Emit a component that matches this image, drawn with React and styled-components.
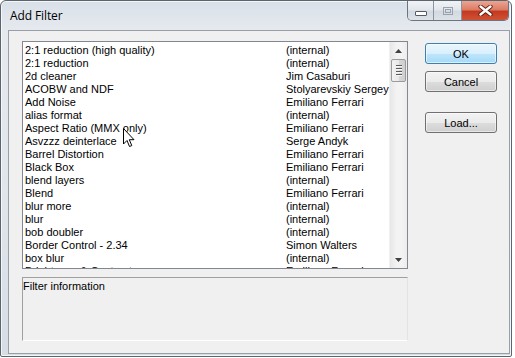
import React from "react";
import styled, { createGlobalStyle } from "styled-components";

const GlobalStyle = createGlobalStyle`
  html, body { margin: 0; padding: 0; background: #ffffff; }
  body { width: 515px; height: 358px; overflow: hidden; }
`;

const UI_FONT = `"Liberation Sans", Arial, sans-serif`;

const Win = styled.div`
  position: relative;
  box-sizing: border-box;
  width: 512px;
  height: 357px;
  border: 1px solid #5b6570;
  border-radius: 6px 6px 2px 2px;
  background: linear-gradient(180deg, #d9e0e8 0px, #e6eaef 30px, #e0e5eb 200px, #d6dde5 100%);
  display: flex;
  flex-direction: column;
  box-shadow: inset 0 0 0 1px rgba(255,255,255,0.7);
`;

const TitleBar = styled.div`
  height: 29px;
  display: flex;
  align-items: flex-start;
  padding-left: 9px;
`;

const Title = styled.span`
  font-family: "Open Sans", "Noto Sans", sans-serif;
  font-size: 12px;
  color: #000;
  margin-top: 6px;
  letter-spacing: -0.1px;
`;

const Caption = styled.div`
  margin-left: auto;
  margin-right: 2px;
  display: flex;
  height: 19px;
  border: 1px solid #6b7582;
  border-top: none;
  border-radius: 0 0 5px 5px;
  overflow: hidden;
`;

const CapBtn = styled.div`
  width: ${(p) => p.w}px;
  height: 19px;
  display: flex;
  align-items: center;
  justify-content: center;
  background: ${(p) =>
    p.close
      ? "linear-gradient(180deg, #eaa592 0%, #dd7d66 45%, #c43a20 55%, #cf5235 100%)"
      : "linear-gradient(180deg, #f1f3f6 0%, #e3e7ec 45%, #d3d9e0 55%, #dde2e8 100%)"};
  border-left: ${(p) => (p.first ? "none" : "1px solid #8a939e")};
`;

const MinGlyph = styled.div`
  width: 10px;
  height: 3px;
  border: 1px solid #535b66;
  background: #fff;
  margin-top: 5px;
  border-radius: 1px;
`;

const MaxGlyph = styled.div`
  width: 10px;
  height: 8px;
  border: 1px solid #9aa2ad;
  box-sizing: border-box;
  display: flex;
  align-items: center;
  justify-content: center;
  &::after {
    content: "";
    width: 4px;
    height: 2px;
    border: 1px solid #9aa2ad;
  }
`;

const Client = styled.div`
  flex: 1;
  margin: 0 1px 2px 7px;
  background: #f0f0f0;
  border: 1px solid #97a0aa;
  display: flex;
  padding: 10px 0 0 13px;
`;

const LeftCol = styled.div`
  width: 386px;
  display: flex;
  flex-direction: column;
  gap: 8px;
`;

const ListBox = styled.div`
  position: relative;
  box-sizing: border-box;
  height: 228px;
  border: 1px solid #828790;
  background: #fff;
  display: flex;
  overflow: hidden;
`;

const Rows = styled.div`
  flex: 1;
  padding: 2px 0 0 2px;
  overflow: hidden;
`;

const Row = styled.div`
  display: grid;
  grid-template-columns: 261px 1fr;
  height: 13px;
  line-height: 13px;
  font-family: ${UI_FONT};
  font-size: 11px;
  color: #000;
  white-space: nowrap;
`;

const ScrollBar = styled.div`
  width: 17px;
  display: flex;
  flex-direction: column;
  align-items: center;
  background: linear-gradient(90deg, #e7e7e7, #f3f3f3 40%, #f3f3f3 70%, #ececec);
  border-left: 1px solid #f0f0f0;
`;

const Arrow = styled.div`
  height: 17px;
  display: flex;
  align-items: center;
  justify-content: center;
  width: 100%;
`;

const Thumb = styled.div`
  box-sizing: border-box;
  width: 15px;
  height: 23px;
  border: 1px solid #9b9b9b;
  border-radius: 2px;
  background: linear-gradient(90deg, #f3f3f3, #e8e8e8 50%, #d7d7d7 51%, #cfcfcf);
  display: flex;
  flex-direction: column;
  align-items: center;
  justify-content: center;
  gap: 1px;
`;

const Grip = styled.div`
  width: 6px;
  height: 1px;
  background: #5a5a5a;
  box-shadow: 0 1px 0 #f8f8f8;
  margin-bottom: 1px;
`;

const Track = styled.div`
  flex: 1;
`;

const InfoBox = styled.div`
  box-sizing: border-box;
  height: 64px;
  border: 1px solid;
  border-color: #a0a0a0 #e3e3e3 #ffffff #a0a0a0;
  background: #f0f0f0;
  padding: 2px 0 0 0;
  font-family: ${UI_FONT};
  font-size: 11px;
  color: #000;
`;

const RightCol = styled.div`
  margin-left: 17px;
  display: flex;
  flex-direction: column;
  padding-top: 2px;
`;

const Button = styled.div`
  box-sizing: border-box;
  width: 72px;
  height: 21px;
  margin-bottom: ${(p) => p.mb}px;
  border: 1px solid ${(p) => (p.primary ? "#3c7fb1" : "#707070")};
  border-radius: 3px;
  background: ${(p) =>
    p.primary
      ? "linear-gradient(180deg, #eaf6fd 0%, #d9f0fc 50%, #bee6fd 51%, #a7d9f5 100%)"
      : "linear-gradient(180deg, #f2f2f2 0%, #ebebeb 50%, #dddddd 51%, #cfcfcf 100%)"};
  box-shadow: inset 0 0 0 1px ${(p) => (p.primary ? "rgba(255,255,255,0.6)" : "rgba(255,255,255,0.5)")};
  display: flex;
  align-items: center;
  justify-content: center;
  font-family: ${UI_FONT};
  font-size: 11px;
  color: #000;
`;

const Cursor = styled.svg`
  position: absolute;
  left: 100px;
  top: 86px;
  pointer-events: none;
`;

const rows = [
  ["2:1 reduction (high quality)", "(internal)"],
  ["2:1 reduction", "(internal)"],
  ["2d cleaner", "Jim Casaburi"],
  ["ACOBW and NDF", "Stolyarevskiy Sergey"],
  ["Add Noise", "Emiliano Ferrari"],
  ["alias format", "(internal)"],
  ["Aspect Ratio (MMX only)", "Emiliano Ferrari"],
  ["Asvzzz deinterlace", "Serge Andyk"],
  ["Barrel Distortion", "Emiliano Ferrari"],
  ["Black Box", "Emiliano Ferrari"],
  ["blend layers", "(internal)"],
  ["Blend", "Emiliano Ferrari"],
  ["blur more", "(internal)"],
  ["blur", "(internal)"],
  ["bob doubler", "(internal)"],
  ["Border Control - 2.34", "Simon Walters"],
  ["box blur", "(internal)"],
  ["Brightness & Contrast", "Emiliano Ferrari"],
];

export default function App() {
  return (
    <>
      <GlobalStyle />
      <Win>
        <TitleBar>
          <Title>Add Filter</Title>
          <Caption>
            <CapBtn w={25} first>
              <MinGlyph />
            </CapBtn>
            <CapBtn w={27}>
              <MaxGlyph />
            </CapBtn>
            <CapBtn w={46} close>
              <svg width="15" height="11" viewBox="0 0 15 11">
                <path
                  d="M2.5 1.5 L12.5 9.5 M12.5 1.5 L2.5 9.5"
                  stroke="#5a1a10"
                  strokeWidth="4.2"
                  strokeLinecap="round"
                />
                <path
                  d="M2.5 1.5 L12.5 9.5 M12.5 1.5 L2.5 9.5"
                  stroke="#ffffff"
                  strokeWidth="2.4"
                  strokeLinecap="round"
                />
              </svg>
            </CapBtn>
          </Caption>
        </TitleBar>
        <Client>
          <LeftCol>
            <ListBox>
              <Rows>
                {rows.map(([n, a], i) => (
                  <Row key={i}>
                    <span>{n}</span>
                    <span>{a}</span>
                  </Row>
                ))}
              </Rows>
              <ScrollBar>
                <Arrow>
                  <svg width="7" height="4" viewBox="0 0 7 4">
                    <path d="M3.5 0 L7 4 L0 4 Z" fill="#404040" />
                  </svg>
                </Arrow>
                <Thumb>
                  <Grip />
                  <Grip />
                  <Grip />
                  <Grip />
                </Thumb>
                <Track />
                <Arrow>
                  <svg width="7" height="4" viewBox="0 0 7 4">
                    <path d="M0 0 L7 0 L3.5 4 Z" fill="#404040" />
                  </svg>
                </Arrow>
              </ScrollBar>
              <Cursor width="12" height="20" viewBox="0 0 12 20">
                <path
                  d="M0.5 0.5 L0.5 16 L4 12.5 L6.5 18.5 L8.8 17.6 L6.3 11.7 L11 11.7 Z"
                  fill="#ffffff"
                  stroke="#000000"
                  strokeWidth="1"
                  strokeLinejoin="miter"
                />
              </Cursor>
            </ListBox>
            <InfoBox>Filter information</InfoBox>
          </LeftCol>
          <RightCol>
            <Button primary mb={7}>OK</Button>
            <Button mb={20}>Cancel</Button>
            <Button mb={0}>Load...</Button>
          </RightCol>
        </Client>
      </Win>
    </>
  );
}
